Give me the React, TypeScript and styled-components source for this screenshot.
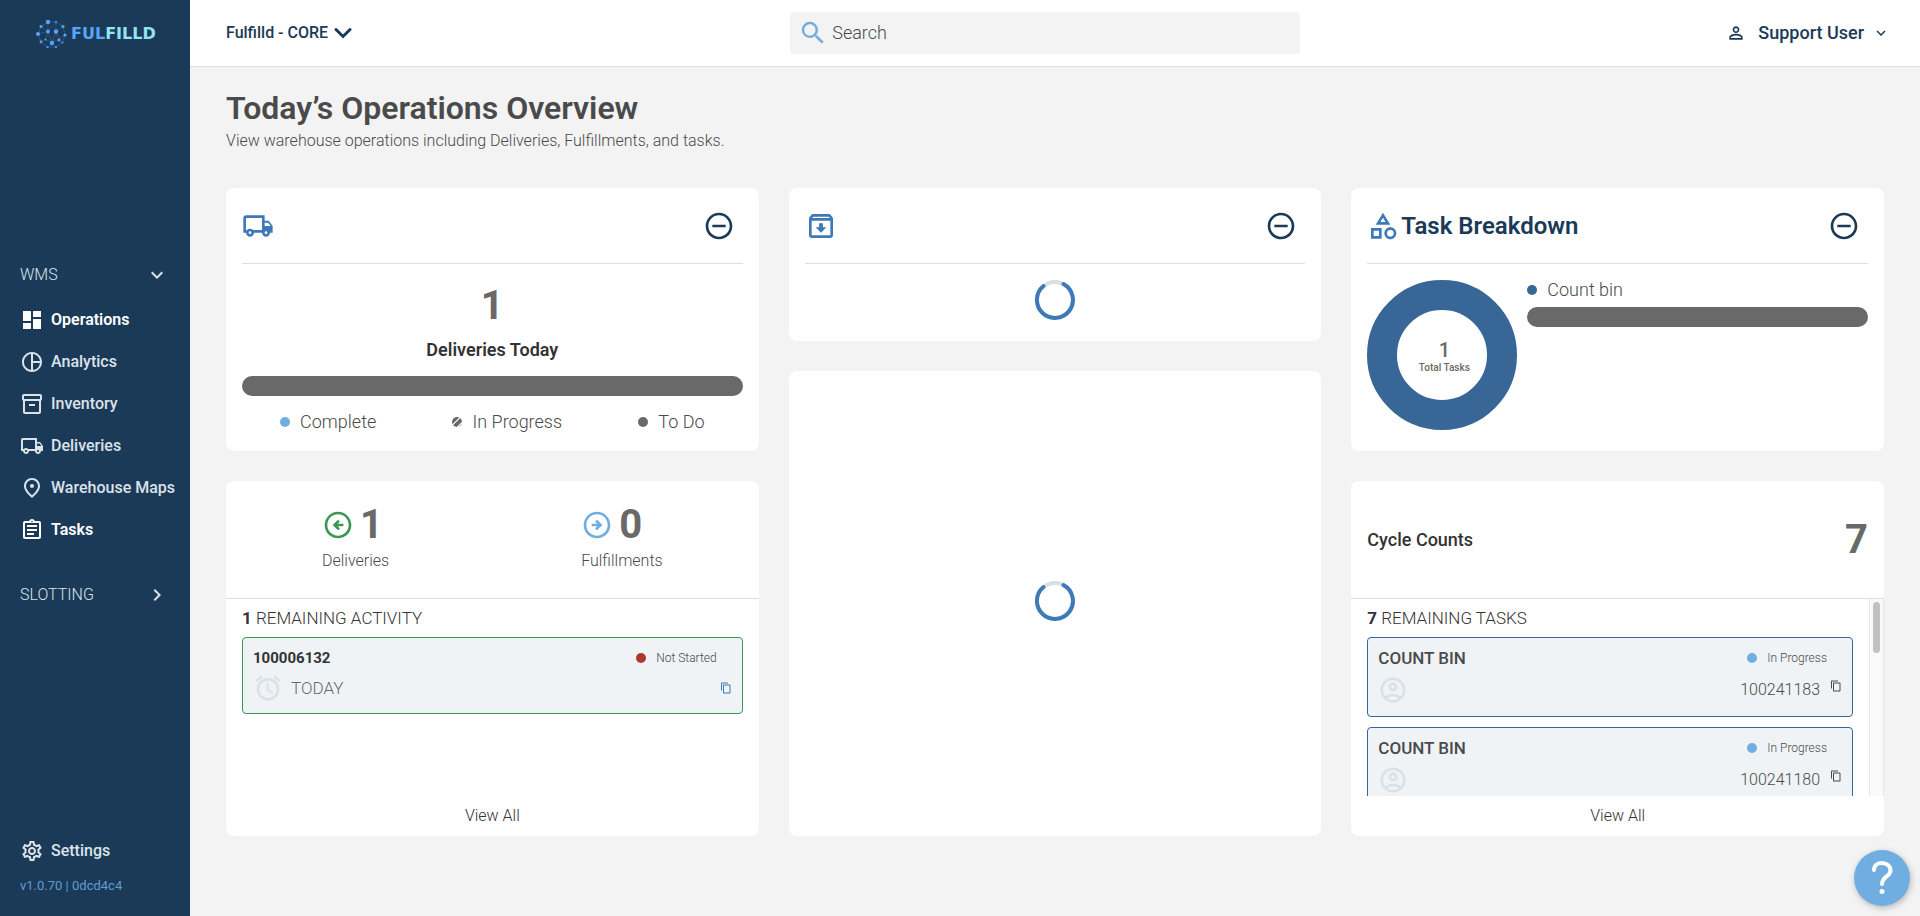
import React from "react";
import styled, { createGlobalStyle, css } from "styled-components";
import {
  MdAccessAlarm,
  MdChevronRight,
  MdContentCopy,
  MdDashboard,
  MdExpandMore,
  MdOutlineAccountCircle,
  MdOutlineArchive,
  MdOutlineArrowCircleLeft,
  MdOutlineArrowCircleRight,
  MdOutlineAssignment,
  MdOutlineCategory,
  MdOutlineInventory2,
  MdOutlineLocalShipping,
  MdOutlinePieChart,
  MdOutlinePlace,
  MdOutlineRemoveCircleOutline,
  MdOutlineSettings,
  MdPersonOutline,
  MdSearch,
} from "react-icons/md";

const color = {
  navy: "#1b3a57",
  blue: "#3f7ab8",
  deepBlue: "#386697",
  sky: "#70ade1",
  green: "#3a9755",
  red: "#ad382f",
  page: "#f3f3f3",
  text: "#333333",
  soft: "#4a4a4a",
  grey: "#696969",
  line: "#dcdfe2",
  paleLine: "#d6e0e9",
  row: "#eff3f6",
  ghost: "#d9e0e6",
};

const GlobalStyle = createGlobalStyle`
  *, *::before, *::after { box-sizing: border-box; }
  body {
    margin: 0;
    background: ${color.page};
    color: ${color.soft};
    font-family: Roboto, "Liberation Sans", sans-serif;
    font-size: 16px;
    font-weight: 350;
    line-height: 20px;
  }
  button, input { font: inherit; color: inherit; }
  button { background: none; border: 0; padding: 0; cursor: pointer; }
  a { color: inherit; text-decoration: none; }
  h1, h2, p, ul { margin: 0; padding: 0; }
  ul { list-style: none; }
  svg { display: block; flex: none; }
`;

const Shell = styled.div`
  display: grid;
  grid-template-columns: 190px minmax(0, 1fr);
  min-height: 100vh;
`;

const Sidebar = styled.nav`
  display: flex;
  flex-direction: column;
  background: ${color.navy};
  color: #dbe3ea;
`;

const Logo = styled.a`
  display: flex;
  align-items: center;
  gap: 4px;
  margin: 18px 0 0 35px;
  font: bold 16px/32px "DejaVu Sans", sans-serif;
  color: #93e3f5;
`;

const LogoAccent = styled.span`
  color: #57a5f9;
`;

const NavGroups = styled.div`
  flex: 1;
  display: flex;
  flex-direction: column;
  justify-content: center;
  gap: 32px;
  padding-bottom: 11px;
`;

const GroupToggle = styled.button`
  display: flex;
  width: 100%;
  align-items: center;
  justify-content: space-between;
  height: 24px;
  padding: 0 21px 0 20px;
  font-weight: 300;
`;

const NavList = styled.ul`
  margin-top: 12px;
`;

const NavLink = styled.a<{ $bright?: boolean }>`
  display: flex;
  align-items: center;
  gap: 7px;
  height: 42px;
  padding-left: 20px;
  font-weight: 500;
  white-space: nowrap;
  ${(p) => p.$bright && css`color: #fff; font-weight: 600;`}
`;

const NavFooter = styled.div`
  padding-bottom: 20px;
`;

const Version = styled.p`
  padding-left: 20px;
  margin-top: 4px;
  font-size: 13px;
  font-weight: 400;
  color: #5f9dd3;
`;

const Content = styled.div`
  display: flex;
  flex-direction: column;
  min-width: 0;
`;

const TopBar = styled.header`
  display: flex;
  align-items: center;
  justify-content: space-between;
  height: 67px;
  padding: 0 30px 0 36px;
  background: #fff;
  border-bottom: 1px solid ${color.paleLine};
  color: ${color.navy};
`;

const SitePicker = styled.button`
  display: flex;
  align-items: center;
  gap: 6px;
  padding-right: 12px;
  font-weight: 500;
`;

const SearchBox = styled.label`
  display: flex;
  align-items: center;
  gap: 4px;
  width: 510px;
  height: 42px;
  padding: 0 8px;
  border-radius: 4px;
  background: ${color.page};
  color: ${color.sky};
`;

const SearchInput = styled.input`
  flex: 1;
  min-width: 0;
  border: 0;
  padding: 0;
  outline: 0;
  background: none;
  font-size: 18px;
  color: ${color.text};
  &::placeholder { color: ${color.soft}; opacity: 1; }
`;

const UserMenu = styled.button`
  display: flex;
  align-items: center;
  font-size: 18px;
  font-weight: 500;
`;

const UserName = styled.span`
  margin: 0 8px 0 12px;
`;

const Page = styled.main`
  padding: 22px 36px 36px;
`;

const Title = styled.h1`
  font-size: 32px;
  line-height: 38px;
  font-weight: 600;
`;

const Subtitle = styled.p`
  margin-top: 4px;
  font-size: 16px;
`;

const Board = styled.div`
  display: grid;
  grid-template-columns: repeat(3, minmax(0, 1fr));
  gap: 30px;
  margin-top: 37px;
`;

const Column = styled.div`
  display: flex;
  flex-direction: column;
  gap: 30px;
`;

const Card = styled.section<{ $grow?: boolean; $height?: number }>`
  display: flex;
  flex-direction: column;
  background: #fff;
  border-radius: 8px;
  overflow: hidden;
  ${(p) => p.$grow && css`flex: 1; align-items: center; justify-content: center; padding-bottom: 6px;`}
  ${(p) => p.$height && css`height: ${p.$height}px;`}
`;

const CardHead = styled.header`
  display: flex;
  align-items: center;
  height: 76px;
  margin: 0 16px;
  border-bottom: 1px solid ${color.line};
  color: ${color.blue};
`;

const CardTitle = styled.h2`
  margin-left: 2px;
  font-size: 24px;
  line-height: 28px;
  font-weight: 600;
  color: ${color.navy};
`;

const Collapse = styled.button`
  margin: 0 8px 0 auto;
  color: ${color.navy};
`;

const CardBody = styled.div`
  padding: 16px;
`;

const SpinnerBody = styled.div`
  display: flex;
  justify-content: center;
  padding: 15px 0 20px;
`;

const Figure = styled.p`
  font-size: 40px;
  line-height: 52px;
  font-weight: 700;
  color: ${color.grey};
`;

const DeliverySummary = styled(CardBody)`
  display: flex;
  flex-direction: column;
  align-items: center;
`;

const SummaryLabel = styled.p`
  margin: 8px 0 16px;
  font-size: 18px;
  font-weight: 600;
  color: ${color.text};
`;

const Bar = styled.div`
  width: 100%;
  height: 20px;
  border-radius: 10px;
  background: ${color.grey};
`;

const Legend = styled.ul`
  display: flex;
  justify-content: space-around;
  width: 100%;
  margin-top: 16px;
`;

const LegendItem = styled.li`
  display: flex;
  align-items: center;
  gap: 10px;
  font-size: 18px;
  font-weight: 300;
`;

const Dot = styled.span<{ $color?: string }>`
  flex: none;
  width: 10px;
  height: 10px;
  border-radius: 50%;
  background: ${(p) =>
    p.$color ??
    `repeating-linear-gradient(135deg, #ddd 0 2px, ${color.grey} 2px 5px)`};
`;

const Breakdown = styled(CardBody)`
  display: flex;
  gap: 10px;
`;

const Donut = styled.div`
  flex: none;
  display: flex;
  flex-direction: column;
  align-items: center;
  justify-content: center;
  width: 150px;
  height: 150px;
  padding: 6px 0 0 4px;
  border: 30px solid ${color.deepBlue};
  border-radius: 50%;
  font-size: 10px;
  line-height: 16px;
  font-weight: 500;
  color: ${color.grey};
`;

const DonutValue = styled.span`
  font-size: 20px;
  line-height: 20px;
`;

const Series = styled.div`
  flex: 1;
  display: flex;
  flex-direction: column;
  gap: 7px;
`;

const Totals = styled.div`
  display: flex;
  justify-content: space-around;
  flex: none;
  height: 118px;
  padding-top: 18px;
  border-bottom: 1px solid ${color.paleLine};
`;

const TotalValue = styled.div<{ $color: string }>`
  display: flex;
  align-items: center;
  gap: 6px;
  color: ${(p) => p.$color};
`;

const CycleHead = styled.div`
  display: flex;
  flex: none;
  align-items: center;
  justify-content: space-between;
  height: 118px;
  padding: 0 16px;
  border-bottom: 1px solid ${color.line};
`;

const CycleTitle = styled.h2`
  font-size: 18px;
  line-height: 20px;
  font-weight: 500;
  color: ${color.text};
`;

const ListArea = styled.div`
  flex: 1;
  min-width: 0;
  min-height: 0;
  padding: 8px 16px 0;
  overflow: hidden;
`;

const ScrollFrame = styled.div`
  display: flex;
  flex: 1;
  min-height: 0;
`;

const ScrollTrack = styled.div`
  flex: none;
  width: 15px;
  padding: 3px;
  background: #fafafa;
  border: solid #e8e8e8;
  border-width: 0 1px;
`;

const ScrollThumb = styled.div`
  height: 51px;
  border-radius: 4px;
  background: #c1c1c1;
`;

const ListTitle = styled.p`
  font-size: 17px;
  line-height: 22px;
  font-weight: 300;
  color: ${color.text};
  b { font-weight: 700; }
`;

const Entry = styled.article<{ $color: string; $tall?: boolean }>`
  display: flex;
  flex-direction: column;
  gap: ${(p) => (p.$tall ? 7 : 5)}px;
  height: ${(p) => (p.$tall ? 80 : 77)}px;
  margin: 8px 0 10px;
  padding: 10px;
  border: 1px solid ${(p) => p.$color};
  border-radius: 4px;
  background: ${color.row};
`;

const EntryLine = styled.div`
  display: flex;
  align-items: center;
  justify-content: space-between;
`;

const EntryName = styled.span<{ $dark?: boolean }>`
  font-size: ${(p) => (p.$dark ? 15 : 17)}px;
  font-weight: ${(p) => (p.$dark ? 700 : 500)};
  color: ${(p) => (p.$dark ? color.text : color.soft)};
`;

const Status = styled.span`
  display: flex;
  align-items: center;
  gap: 10px;
  padding-right: 15px;
  font-size: 12px;
`;

const Due = styled.span`
  display: flex;
  align-items: center;
  gap: 8px;
  font-size: 17px;
  color: ${color.ghost};
  span { color: ${color.grey}; }
`;

const Reference = styled.span`
  display: flex;
  align-items: flex-start;
  gap: 10px;
`;

const CopyButton = styled.button<{ $color: string }>`
  color: ${(p) => p.$color};
`;

const ViewAll = styled.a`
  flex: none;
  height: 40px;
  line-height: 40px;
  text-align: center;
  color: ${color.text};
`;

const HelpButton = styled.button`
  position: fixed;
  right: 10px;
  bottom: 10px;
  display: grid;
  place-items: center;
  width: 56px;
  height: 56px;
  border-radius: 50%;
  background: ${color.sky};
  box-shadow: 1px 2px 6px rgba(0, 0, 0, 0.25);
`;

const Globe = () => (
  <svg width="32" height="32" viewBox="0 0 32 32" aria-hidden="true">
    <g stroke="#356a9f" strokeWidth="0.6" fill="none">
      <path d="M13 4 21 4 28 8.500 30 17 27.500 24.500 21 29 12.500 29 6 24 3 16 6 8.500z" />
      <path d="M13 4V13.500M21 4 13 13.500M21 13.500V4M28 8.500 21 13.500M6 8.500 13 13.500M3 16 13 13.500M13 13.500 17 25 21 13.500M30 17 17 25M24 22 21 13.500M10.500 21.500 13 13.500M6 24 10.500 21.500 17 25 12.500 29M17 25 21 29M27.500 24.500 24 22" />
    </g>
    <g fill="#57a5f9">
      <circle cx="13" cy="4" r="2.200" /><circle cx="21" cy="4" r="1" />
      <circle cx="6" cy="8.500" r="1.600" /><circle cx="28" cy="8.500" r="1.600" />
      <circle cx="13" cy="13.500" r="1.900" /><circle cx="21" cy="13.500" r="2.200" />
      <circle cx="3" cy="16" r="2" /><circle cx="30" cy="17" r="1.600" />
      <circle cx="24" cy="22" r="1.600" /><circle cx="10.500" cy="21.500" r="1" />
      <circle cx="6" cy="24" r="1.400" /><circle cx="27.500" cy="24.500" r="1" />
      <circle cx="17" cy="25" r="2.200" /><circle cx="21" cy="29" r="1.100" />
      <circle cx="12.500" cy="29" r="1.100" />
    </g>
  </svg>
);

const Spinner = () => (
  <svg width="42" height="42" viewBox="0 0 42 42" fill="none" role="img" aria-label="Loading">
    <circle cx="21" cy="21" r="18" stroke="#d6e0e6" strokeWidth="4" />
    <path d="M29.500 5.100A18 18 0 1 1 9.500 7" stroke={color.blue} strokeWidth="4" strokeLinecap="round" />
  </svg>
);

const BoldChevron = () => (
  <svg width="18" height="12" viewBox="0 0 18 12" fill="none" aria-hidden="true">
    <path d="M2 2.500 9 9.500 16 2.500" stroke={color.navy} strokeWidth="3" strokeLinecap="round" />
  </svg>
);

const QuestionMark = () => (
  <svg width="24" height="36" viewBox="0 0 24 36" fill="none" aria-hidden="true">
    <path d="M4 10C4 5.500 7.500 3 12 3S20.500 6 20.500 10.500C20.500 16.500 12 16.500 12 24" stroke="#fff" strokeWidth="4" strokeLinecap="round" />
    <circle cx="12" cy="31.500" r="2.500" fill="#fff" />
  </svg>
);

const navItems = [
  { label: "Operations", icon: MdDashboard, bright: true },
  { label: "Analytics", icon: MdOutlinePieChart },
  { label: "Inventory", icon: MdOutlineInventory2 },
  { label: "Deliveries", icon: MdOutlineLocalShipping },
  { label: "Warehouse Maps", icon: MdOutlinePlace },
  { label: "Tasks", icon: MdOutlineAssignment, bright: true },
];

const tasks = ["100241183", "100241180"];

const CollapseButton = ({ label }: { label: string }) => (
  <Collapse type="button" aria-label={`Collapse ${label}`}>
    <MdOutlineRemoveCircleOutline size={32} />
  </Collapse>
);

export default function App() {
  return (
    <>
      <GlobalStyle />
      <Shell>
        <Sidebar>
          <Logo href="#">
            <Globe />
            <span><LogoAccent>FUL</LogoAccent>FILLD</span>
          </Logo>
          <NavGroups>
            <div>
              <GroupToggle type="button">WMS<MdExpandMore size={24} /></GroupToggle>
              <NavList>
                {navItems.map(({ label, icon: Icon, bright }) => (
                  <li key={label}>
                    <NavLink href="#" $bright={bright}><Icon size={24} />{label}</NavLink>
                  </li>
                ))}
              </NavList>
            </div>
            <GroupToggle type="button">SLOTTING<MdChevronRight size={24} /></GroupToggle>
          </NavGroups>
          <NavFooter>
            <NavLink href="#"><MdOutlineSettings size={24} />Settings</NavLink>
            <Version>v1.0.70 | 0dcd4c4</Version>
          </NavFooter>
        </Sidebar>

        <Content>
          <TopBar>
            <SitePicker type="button">Fulfilld - CORE<BoldChevron /></SitePicker>
            <SearchBox>
              <MdSearch size={30} />
              <SearchInput type="text" placeholder="Search" aria-label="Search" />
            </SearchBox>
            <UserMenu type="button">
              <MdPersonOutline size={20} />
              <UserName>Support User</UserName>
              <MdExpandMore size={18} />
            </UserMenu>
          </TopBar>

          <Page>
            <Title>Today’s Operations Overview</Title>
            <Subtitle>View warehouse operations including Deliveries, Fulfillments, and tasks.</Subtitle>

            <Board>
              <Column>
                <Card $height={263}>
                  <CardHead>
                    <MdOutlineLocalShipping size={32} />
                    <CollapseButton label="deliveries" />
                  </CardHead>
                  <DeliverySummary>
                    <Figure>1</Figure>
                    <SummaryLabel>Deliveries Today</SummaryLabel>
                    <Bar />
                    <Legend>
                      <LegendItem><Dot $color={color.sky} />Complete</LegendItem>
                      <LegendItem><Dot />In Progress</LegendItem>
                      <LegendItem><Dot $color={color.grey} />To Do</LegendItem>
                    </Legend>
                  </DeliverySummary>
                </Card>

                <Card $height={355}>
                  <Totals>
                    <div>
                      <TotalValue $color={color.green}>
                        <MdOutlineArrowCircleLeft size={32} /><Figure>1</Figure>
                      </TotalValue>
                      Deliveries
                    </div>
                    <div>
                      <TotalValue $color={color.sky}>
                        <MdOutlineArrowCircleRight size={32} /><Figure>0</Figure>
                      </TotalValue>
                      Fulfillments
                    </div>
                  </Totals>
                  <ListArea>
                    <ListTitle><b>1</b> REMAINING ACTIVITY</ListTitle>
                    <Entry $color={color.green}>
                      <EntryLine>
                        <EntryName $dark>100006132</EntryName>
                        <Status><Dot $color={color.red} />Not Started</Status>
                      </EntryLine>
                      <EntryLine>
                        <Due><MdAccessAlarm size={30} /><span>TODAY</span></Due>
                        <CopyButton type="button" aria-label="Copy number" $color={color.blue}><MdContentCopy size={12} /></CopyButton>
                      </EntryLine>
                    </Entry>
                  </ListArea>
                  <ViewAll href="#">View All</ViewAll>
                </Card>
              </Column>

              <Column>
                <Card>
                  <CardHead>
                    <MdOutlineArchive size={32} />
                    <CollapseButton label="fulfillments" />
                  </CardHead>
                  <SpinnerBody><Spinner /></SpinnerBody>
                </Card>
                <Card $grow><Spinner /></Card>
              </Column>

              <Column>
                <Card $height={263}>
                  <CardHead>
                    <MdOutlineCategory size={32} />
                    <CardTitle>Task Breakdown</CardTitle>
                    <CollapseButton label="task breakdown" />
                  </CardHead>
                  <Breakdown>
                    <Donut><DonutValue>1</DonutValue>Total Tasks</Donut>
                    <Series>
                      <LegendItem as="div"><Dot $color={color.deepBlue} />Count bin</LegendItem>
                      <Bar />
                    </Series>
                  </Breakdown>
                </Card>

                <Card $height={355}>
                  <CycleHead>
                    <CycleTitle>Cycle Counts</CycleTitle>
                    <Figure>7</Figure>
                  </CycleHead>
                  <ScrollFrame>
                    <ListArea>
                      <ListTitle><b>7</b> REMAINING TASKS</ListTitle>
                      {tasks.map((number) => (
                        <Entry key={number} $color={color.deepBlue} $tall>
                          <EntryLine>
                            <EntryName>COUNT BIN</EntryName>
                            <Status><Dot $color={color.sky} />In Progress</Status>
                          </EntryLine>
                          <EntryLine>
                            <Due><MdOutlineAccountCircle size={30} /></Due>
                            <Reference>
                              {number}
                              <CopyButton type="button" aria-label="Copy number" $color={color.soft}><MdContentCopy size={12} /></CopyButton>
                            </Reference>
                          </EntryLine>
                        </Entry>
                      ))}
                    </ListArea>
                    <ScrollTrack><ScrollThumb /></ScrollTrack>
                  </ScrollFrame>
                  <ViewAll href="#">View All</ViewAll>
                </Card>
              </Column>
            </Board>
          </Page>
        </Content>
      </Shell>
      <HelpButton type="button" aria-label="Help"><QuestionMark /></HelpButton>
    </>
  );
}
